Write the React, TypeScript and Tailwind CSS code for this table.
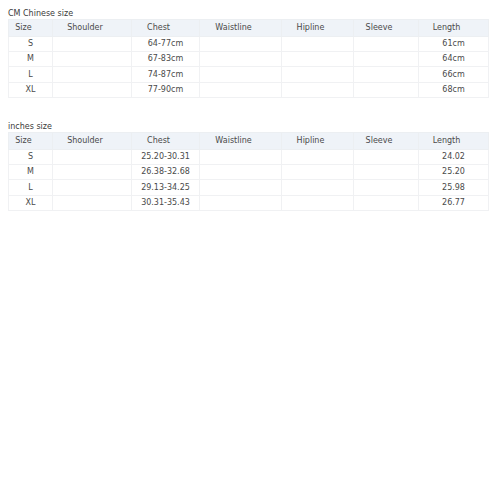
import React from 'react';

const headers = ["Size", "Shoulder", "Chest", "Waistline", "Hipline", "Sleeve", "Length"];
const widths = ["w-[44px]", "w-[79px]", "w-[68px]", "w-[82px]", "w-[72px]", "w-[65px]", "w-[70px]"];

const cmRows = [
  ["S", "", "64-77cm", "", "", "", "61cm"],
  ["M", "", "67-83cm", "", "", "", "64cm"],
  ["L", "", "74-87cm", "", "", "", "66cm"],
  ["XL", "", "77-90cm", "", "", "", "68cm"],
];

const inchRows = [
  ["S", "", "25.20-30.31", "", "", "", "24.02"],
  ["M", "", "26.38-32.68", "", "", "", "25.20"],
  ["L", "", "29.13-34.25", "", "", "", "25.98"],
  ["XL", "", "30.31-35.43", "", "", "", "26.77"],
];

function SizeTable({ title, rows }: { title: string; rows: string[][] }) {
  return (
    <div className="flex flex-col">
      <div className="h-[11px] leading-[11px] text-[8px] text-[#3a3a3a]">{title}</div>
      <table className="table-fixed border-collapse w-[480px] text-[8px] text-[#4a4a4a]">
        <thead>
          <tr className="h-[17px] bg-[#eff3f8]">
            {headers.map((h, i) => (
              <th key={h} className={`${widths[i]} font-normal text-center pr-[14px] border border-[#eceff2]`}>
                {h}
              </th>
            ))}
          </tr>
        </thead>
        <tbody>
          {rows.map((r, ri) => (
            <tr key={ri} className={ri === 2 ? "h-[16px]" : "h-[15px]"}>
              {r.map((c, ci) => (
                <td key={ci} className="text-center p-0 border border-[#f0f1f3]">
                  {c}
                </td>
              ))}
            </tr>
          ))}
        </tbody>
      </table>
    </div>
  );
}

export default function App() {
  return (
    <div className="w-[500px] h-[500px] bg-white px-[8px] pt-[8px] flex flex-col gap-[23px] font-['DejaVu_Sans',sans-serif]">
      <SizeTable title="CM Chinese size" rows={cmRows} />
      <SizeTable title="inches size" rows={inchRows} />
    </div>
  );
}
